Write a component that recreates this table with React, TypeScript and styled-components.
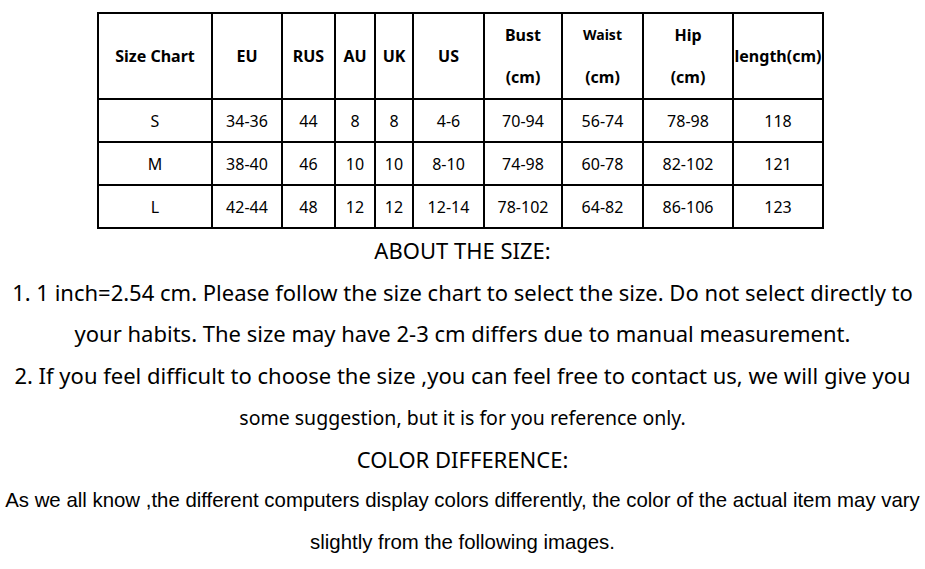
import React from 'react';
import styled, { createGlobalStyle } from 'styled-components';

const GlobalStyle = createGlobalStyle`
  html, body {
    margin: 0;
    padding: 0;
    background: #ffffff;
  }
  body {
    font-family: "Noto Sans", "Open Sans", Arial, sans-serif;
    color: #000000;
  }
`

type Row = string[];

const columns: { label: string; sub?: string; width: number; small?: boolean }[] = [
  { label: 'Size Chart', width: 114 },
  { label: 'EU', width: 70 },
  { label: 'RUS', width: 53 },
  { label: 'AU', width: 40 },
  { label: 'UK', width: 38 },
  { label: 'US', width: 71 },
  { label: 'Bust', sub: '(cm)', width: 78 },
  { label: 'Waist', sub: '(cm)', width: 81, small: true },
  { label: 'Hip', sub: '(cm)', width: 90 },
  { label: 'length(cm)', width: 90 },
];

const rows: Row[] = [
  ['S', '34-36', '44', '8', '8', '4-6', '70-94', '56-74', '78-98', '118'],
  ['M', '38-40', '46', '10', '10', '8-10', '74-98', '60-78', '82-102', '121'],
  ['L', '42-44', '48', '12', '12', '12-14', '78-102', '64-82', '86-106', '123'],
];

// size is only set where the source text was pasted in smaller
const sizeNotes: { text: string; size?: number }[] = [
  { text: '1. 1 inch=2.54 cm. Please follow the size chart to select the size. Do not select directly to' },
  { text: 'your habits. The size may have 2-3 cm differs due to manual measurement.' },
  { text: '2. If you feel difficult to choose the size ,you can feel free to contact us, we will give you' },
  { text: 'some suggestion, but it is for you reference only.', size: 19.5 },
];

const colorNotes = [
  'As we all know ,the different computers display colors differently, the color of the actual item may vary',
  'slightly from the following images.',
];

const App: React.FC = () => {
  return (
    <Page>
      <GlobalStyle />
      <ChartTable>
        <colgroup>
          {columns.map(c => (
            <col key={c.label} style={{ width: c.width }} />
          ))}
        </colgroup>
        <thead>
          <tr>
            {columns.map(c => (
              <HeadCell key={c.label}>
                {c.sub ? (
                  <Stacked>
                    <HeadLabel small={c.small}>{c.label}</HeadLabel>
                    <span>{c.sub}</span>
                  </Stacked>
                ) : c.label}
              </HeadCell>
            ))}
          </tr>
        </thead>
        <tbody>
          {rows.map(r => (
            <tr key={r[0]}>
              {r.map((v, i) => (
                <DataCell key={i}>{v}</DataCell>
              ))}
            </tr>
          ))}
        </tbody>
      </ChartTable>

      <Notes>
        <Line>ABOUT THE SIZE:</Line>
        {sizeNotes.map(l => (
          <Line key={l.text} size={l.size}>{l.text}</Line>
        ))}
        <Line>COLOR DIFFERENCE:</Line>
        {colorNotes.map(l => (
          <Line key={l} narrow>{l}</Line>
        ))}
      </Notes>
    </Page>
  );
}

export default App;

const Page = styled.div`
  width: 925px;
  height: 569px;
  overflow: hidden;
  padding-top: 12px;
  box-sizing: border-box;
`

const ChartTable = styled.table`
  margin-left: 97px;
  border-collapse: collapse;
  table-layout: fixed;
  width: 725px;
  border: 2px solid #000;
`

const HeadCell = styled.th`
  height: 84px;
  padding: 0;
  border: 2px solid #000;
  font-size: 16px;
  font-weight: 700;
  text-align: center;
  white-space: nowrap;
  overflow: hidden;
`

const Stacked = styled.div`
  display: flex;
  flex-direction: column;
  align-items: center;
  gap: 20px;
`

const HeadLabel = styled.span<{ small?: boolean }>`
  font-size: ${p => (p.small ? '14px' : '16px')};
  line-height: 22px;
`

const DataCell = styled.td`
  height: 41px;
  padding: 0;
  border: 2px solid #000;
  font-size: 16px;
  text-align: center;
  white-space: nowrap;
`

const Notes = styled.div`
  display: flex;
  flex-direction: column;
  align-items: center;
  font-size: 22px;
  line-height: 41.7px;
  margin-top: 1px;
`

const Line = styled.div<{ narrow?: boolean; size?: number }>`
  white-space: nowrap;
  font-family: ${p => (p.narrow ? '"Liberation Sans Narrow", "Liberation Sans", sans-serif' : 'inherit')};
  font-size: ${p => (p.narrow ? '20.4px' : `${p.size ?? 22}px`)};
`
